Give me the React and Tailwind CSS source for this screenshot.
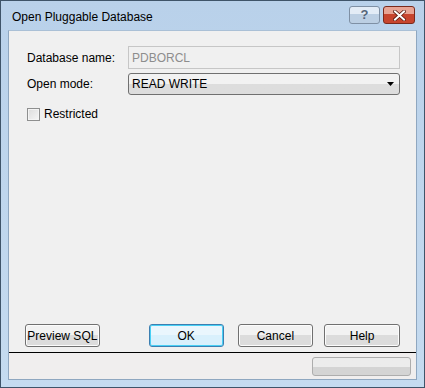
import { useState } from "react";

const btn =
    "h-[23px] rounded-[3px] border border-[#707070] bg-gradient-to-b from-[#f2f2f2] from-50% to-[#dcdcdc] to-50% text-[12px] text-black shadow-[inset_0_0_0_1px_#fcfcfc]";

const App = () => {
    const [restricted, setRestricted] = useState(false);

    return (
        <div
            className="w-[425px] h-[388px] flex flex-col border border-[#3f5469] bg-gradient-to-b from-[#b9d1ea] to-[#c5dbf0] overflow-hidden"
            style={{ fontFamily: '"Liberation Sans", Arial, sans-serif' }}
        >
            {/* title bar */}
            <div className="h-[29px] flex items-center justify-between pl-[11px] pr-[9px] shrink-0">
                <span className="text-[12px] text-black mt-[3px]">Open Pluggable Database</span>
                <div className="flex gap-[3px] mt-[-1px]">
                    <div className="w-[31px] h-[18px] rounded-[3px] border border-[#7f90a4] bg-gradient-to-b from-[#e3ecf6] from-45% to-[#bccfe3] to-45% flex items-center justify-center text-[13px] font-bold text-[#56667a]">
                        ?
                    </div>
                    <div className="w-[32px] h-[18px] rounded-[3px] border border-[#7a2a1c] bg-gradient-to-b from-[#e8a494] from-45% to-[#c7452e] to-45% flex items-center justify-center">
                        <svg width="13" height="11" viewBox="0 0 13 11">
                            <path d="M2 1.5 L11 9.5 M11 1.5 L2 9.5" stroke="#5a1a10" strokeWidth="3.6" strokeLinecap="square" />
                            <path d="M2 1.5 L11 9.5 M11 1.5 L2 9.5" stroke="#ffffff" strokeWidth="2" strokeLinecap="square" />
                        </svg>
                    </div>
                </div>
            </div>

            {/* client area */}
            <div className="flex-1 mx-[7px] mb-[7px] flex flex-col bg-[#f0f0f0] border border-[#8fa7c0] border-t-[#aac0d6]">
                <div className="flex-1 flex flex-col pt-[15px] pl-[18px] pr-[16px]">
                    <div className="flex items-center h-[23px]">
                        <label className="w-[101px] text-[12px] text-black">Database name:</label>
                        <div className="flex-1 h-[23px] border border-[#c6c6c6] bg-[#f0f0f0] flex items-center px-[3px] text-[12px] text-[#8d8d8d]">
                            PDBORCL
                        </div>
                    </div>
                    <div className="flex items-center h-[22px] mt-[4px]">
                        <label className="w-[101px] text-[12px] text-black">Open mode:</label>
                        <div className="flex-1 h-[22px] rounded-[3px] border border-[#707070] bg-gradient-to-b from-[#f2f2f2] from-50% to-[#dddddd] to-50% flex items-center justify-between pl-[3px] pr-[5px] text-[12px] text-black">
                            <span>READ WRITE</span>
                            <svg width="7" height="4" viewBox="0 0 7 4">
                                <path d="M0 0 H7 L3.5 4 Z" fill="#000" />
                            </svg>
                        </div>
                    </div>
                    <label className="flex items-center gap-[4px] mt-[10px] text-[12px] text-black">
                        <span
                            onClick={() => setRestricted(!restricted)}
                            className="w-[13px] h-[13px] border border-[#8e8f8f] bg-gradient-to-br from-[#dcdcdc] to-[#f6f6f6] shadow-[inset_0_0_0_1px_#f4f4f4]"
                        />
                        Restricted
                    </label>

                    <div className="flex-1" />

                    <div className="flex items-center pb-[5px]">
                        <button className={btn + " -ml-[2px] w-[75px]"}>Preview SQL</button>
                        <button className="ml-[49px] w-[75px] h-[23px] rounded-[3px] border border-[#3c7fb1] bg-gradient-to-b from-[#eaf6fd] from-50% to-[#d9f0fc] to-50% text-[12px] text-black shadow-[inset_0_0_0_1px_#48d0f5]">
                            OK
                        </button>
                        <button className={btn + " ml-[14px] w-[76px]"}>Cancel</button>
                        <button className={btn + " ml-[11px] w-[76px]"}>Help</button>
                    </div>
                </div>
                <div className="h-[1px] bg-black" />
                <div className="h-[26px] flex items-center justify-end pr-[5px] bg-[#f0eeee]">
                    <div className="w-[99px] h-[19px] rounded-[3px] border border-[#adadad] bg-gradient-to-b from-[#ececec] from-50% to-[#d4d4d4] to-50%" />
                </div>
            </div>
        </div>
    );
};

export default App;
